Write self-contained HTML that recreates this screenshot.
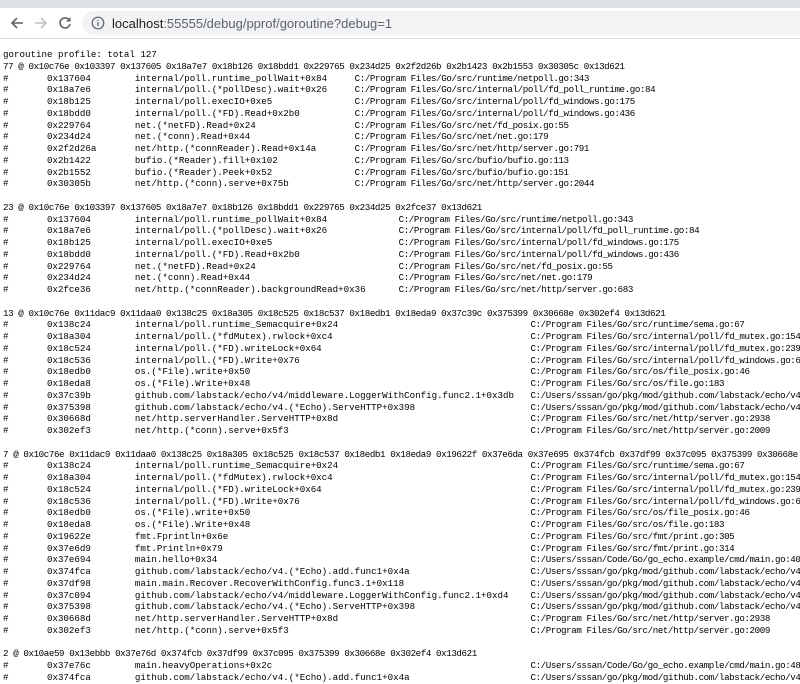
<!DOCTYPE html>
<html><head><meta charset="utf-8"><style>
html,body{margin:0;padding:0;width:800px;height:677px;overflow:hidden;background:#fff}
.tabs{position:absolute;left:0;top:0;width:800px;height:8px;background:#dee1e6}
.bar{position:absolute;left:0;top:8px;width:800px;height:30px;background:#fff;border-bottom:1px solid #dadce0}
.pill{position:absolute;left:82px;top:3px;width:730px;height:24px;border-radius:12px;background:#f1f3f4}
.url{position:absolute;left:112px;top:8px;font:13px "Liberation Sans",sans-serif;color:#202124;white-space:pre}
.url span{color:#5f6368}
.ic{position:absolute;top:7px}
pre{position:absolute;left:3px;top:49px;width:797px;overflow:hidden;margin:0;font-family:"Liberation Mono",monospace;font-size:9.17px;line-height:11.75px;color:#000;white-space:pre}
pre div{height:11.75px;overflow:hidden}
pre div.h{letter-spacing:-0.4px}
i{font-style:normal;display:inline-block;vertical-align:top}
.a{width:8ch}.b{width:16ch}.f1{width:40ch}.f2{width:48ch}.f3{width:72ch}
u{text-decoration:none;letter-spacing:-0.4px}
</style></head><body>
<div class="tabs"></div>
<div class="bar">
<svg class="ic" style="left:8px" width="18" height="16" viewBox="0 0 18 16"><path d="M15 8H4M9 3L4 8l5 5" stroke="#5f6368" stroke-width="1.6" fill="none"/></svg>
<svg class="ic" style="left:32px" width="18" height="16" viewBox="0 0 18 16"><path d="M3 8h11M9 3l5 5-5 5" stroke="#bdc1c6" stroke-width="1.6" fill="none"/></svg>
<svg class="ic" style="left:57px" width="16" height="16" viewBox="0 0 16 16"><path d="M12.5 5.5A5 5 0 1 0 13 9" stroke="#5f6368" stroke-width="1.6" fill="none"/><path d="M13.5 2v4.5H9z" fill="#5f6368"/></svg>
<div class="pill"></div>
<svg class="ic" style="left:91px;top:8px" width="14" height="14" viewBox="0 0 14 14"><circle cx="7" cy="7" r="5.8" stroke="#5f6368" stroke-width="1.2" fill="none"/><path d="M7 6v4M7 4v1" stroke="#5f6368" stroke-width="1.3"/></svg>
<div class="url">localhost<span>:55555/debug/pprof/goroutine?debug=1</span></div>
</div>
<pre><div>goroutine profile: total 127</div><div class="h">77 @ 0x10c76e 0x103397 0x137605 0x18a7e7 0x18b126 0x18bdd1 0x229765 0x234d25 0x2f2d26b 0x2b1423 0x2b1553 0x30305c 0x13d621</div><div><i class="a">#</i><i class="b">0x137604</i><i class="f1">internal/poll.runtime_pollWait+0x84</i><u>C:/Program Files/Go/src/runtime/netpoll.go:343</u></div><div><i class="a">#</i><i class="b">0x18a7e6</i><i class="f1">internal/poll.(*pollDesc).wait+0x26</i><u>C:/Program Files/Go/src/internal/poll/fd_poll_runtime.go:84</u></div><div><i class="a">#</i><i class="b">0x18b125</i><i class="f1">internal/poll.execIO+0xe5</i><u>C:/Program Files/Go/src/internal/poll/fd_windows.go:175</u></div><div><i class="a">#</i><i class="b">0x18bdd0</i><i class="f1">internal/poll.(*FD).Read+0x2b0</i><u>C:/Program Files/Go/src/internal/poll/fd_windows.go:436</u></div><div><i class="a">#</i><i class="b">0x229764</i><i class="f1">net.(*netFD).Read+0x24</i><u>C:/Program Files/Go/src/net/fd_posix.go:55</u></div><div><i class="a">#</i><i class="b">0x234d24</i><i class="f1">net.(*conn).Read+0x44</i><u>C:/Program Files/Go/src/net/net.go:179</u></div><div><i class="a">#</i><i class="b">0x2f2d26a</i><i class="f1">net/http.(*connReader).Read+0x14a</i><u>C:/Program Files/Go/src/net/http/server.go:791</u></div><div><i class="a">#</i><i class="b">0x2b1422</i><i class="f1">bufio.(*Reader).fill+0x102</i><u>C:/Program Files/Go/src/bufio/bufio.go:113</u></div><div><i class="a">#</i><i class="b">0x2b1552</i><i class="f1">bufio.(*Reader).Peek+0x52</i><u>C:/Program Files/Go/src/bufio/bufio.go:151</u></div><div><i class="a">#</i><i class="b">0x30305b</i><i class="f1">net/http.(*conn).serve+0x75b</i><u>C:/Program Files/Go/src/net/http/server.go:2044</u></div><div></div><div class="h">23 @ 0x10c76e 0x103397 0x137605 0x18a7e7 0x18b126 0x18bdd1 0x229765 0x234d25 0x2fce37 0x13d621</div><div><i class="a">#</i><i class="b">0x137604</i><i class="f2">internal/poll.runtime_pollWait+0x84</i><u>C:/Program Files/Go/src/runtime/netpoll.go:343</u></div><div><i class="a">#</i><i class="b">0x18a7e6</i><i class="f2">internal/poll.(*pollDesc).wait+0x26</i><u>C:/Program Files/Go/src/internal/poll/fd_poll_runtime.go:84</u></div><div><i class="a">#</i><i class="b">0x18b125</i><i class="f2">internal/poll.execIO+0xe5</i><u>C:/Program Files/Go/src/internal/poll/fd_windows.go:175</u></div><div><i class="a">#</i><i class="b">0x18bdd0</i><i class="f2">internal/poll.(*FD).Read+0x2b0</i><u>C:/Program Files/Go/src/internal/poll/fd_windows.go:436</u></div><div><i class="a">#</i><i class="b">0x229764</i><i class="f2">net.(*netFD).Read+0x24</i><u>C:/Program Files/Go/src/net/fd_posix.go:55</u></div><div><i class="a">#</i><i class="b">0x234d24</i><i class="f2">net.(*conn).Read+0x44</i><u>C:/Program Files/Go/src/net/net.go:179</u></div><div><i class="a">#</i><i class="b">0x2fce36</i><i class="f2">net/http.(*connReader).backgroundRead+0x36</i><u>C:/Program Files/Go/src/net/http/server.go:683</u></div><div></div><div class="h">13 @ 0x10c76e 0x11dac9 0x11daa0 0x138c25 0x18a305 0x18c525 0x18c537 0x18edb1 0x18eda9 0x37c39c 0x375399 0x30668e 0x302ef4 0x13d621</div><div><i class="a">#</i><i class="b">0x138c24</i><i class="f3">internal/poll.runtime_Semacquire+0x24</i><u>C:/Program Files/Go/src/runtime/sema.go:67</u></div><div><i class="a">#</i><i class="b">0x18a304</i><i class="f3">internal/poll.(*fdMutex).rwlock+0xc4</i><u>C:/Program Files/Go/src/internal/poll/fd_mutex.go:154</u></div><div><i class="a">#</i><i class="b">0x18c524</i><i class="f3">internal/poll.(*FD).writeLock+0x64</i><u>C:/Program Files/Go/src/internal/poll/fd_mutex.go:239</u></div><div><i class="a">#</i><i class="b">0x18c536</i><i class="f3">internal/poll.(*FD).Write+0x76</i><u>C:/Program Files/Go/src/internal/poll/fd_windows.go:639</u></div><div><i class="a">#</i><i class="b">0x18edb0</i><i class="f3">os.(*File).write+0x50</i><u>C:/Program Files/Go/src/os/file_posix.go:46</u></div><div><i class="a">#</i><i class="b">0x18eda8</i><i class="f3">os.(*File).Write+0x48</i><u>C:/Program Files/Go/src/os/file.go:183</u></div><div><i class="a">#</i><i class="b">0x37c39b</i><i class="f3">github.com/labstack/echo/v4/middleware.LoggerWithConfig.func2.1+0x3db</i><u>C:/Users/sssan/go/pkg/mod/github.com/labstack/echo/v4</u></div><div><i class="a">#</i><i class="b">0x375398</i><i class="f3">github.com/labstack/echo/v4.(*Echo).ServeHTTP+0x398</i><u>C:/Users/sssan/go/pkg/mod/github.com/labstack/echo/v4</u></div><div><i class="a">#</i><i class="b">0x30668d</i><i class="f3">net/http.serverHandler.ServeHTTP+0x8d</i><u>C:/Program Files/Go/src/net/http/server.go:2938</u></div><div><i class="a">#</i><i class="b">0x302ef3</i><i class="f3">net/http.(*conn).serve+0x5f3</i><u>C:/Program Files/Go/src/net/http/server.go:2009</u></div><div></div><div class="h">7 @ 0x10c76e 0x11dac9 0x11daa0 0x138c25 0x18a305 0x18c525 0x18c537 0x18edb1 0x18eda9 0x19622f 0x37e6da 0x37e695 0x374fcb 0x37df99 0x37c095 0x375399 0x30668e 0x302ef4 0x13d621</div><div><i class="a">#</i><i class="b">0x138c24</i><i class="f3">internal/poll.runtime_Semacquire+0x24</i><u>C:/Program Files/Go/src/runtime/sema.go:67</u></div><div><i class="a">#</i><i class="b">0x18a304</i><i class="f3">internal/poll.(*fdMutex).rwlock+0xc4</i><u>C:/Program Files/Go/src/internal/poll/fd_mutex.go:154</u></div><div><i class="a">#</i><i class="b">0x18c524</i><i class="f3">internal/poll.(*FD).writeLock+0x64</i><u>C:/Program Files/Go/src/internal/poll/fd_mutex.go:239</u></div><div><i class="a">#</i><i class="b">0x18c536</i><i class="f3">internal/poll.(*FD).Write+0x76</i><u>C:/Program Files/Go/src/internal/poll/fd_windows.go:639</u></div><div><i class="a">#</i><i class="b">0x18edb0</i><i class="f3">os.(*File).write+0x50</i><u>C:/Program Files/Go/src/os/file_posix.go:46</u></div><div><i class="a">#</i><i class="b">0x18eda8</i><i class="f3">os.(*File).Write+0x48</i><u>C:/Program Files/Go/src/os/file.go:183</u></div><div><i class="a">#</i><i class="b">0x19622e</i><i class="f3">fmt.Fprintln+0x6e</i><u>C:/Program Files/Go/src/fmt/print.go:305</u></div><div><i class="a">#</i><i class="b">0x37e6d9</i><i class="f3">fmt.Println+0x79</i><u>C:/Program Files/Go/src/fmt/print.go:314</u></div><div><i class="a">#</i><i class="b">0x37e694</i><i class="f3">main.hello+0x34</i><u>C:/Users/sssan/Code/Go/go_echo.example/cmd/main.go:40</u></div><div><i class="a">#</i><i class="b">0x374fca</i><i class="f3">github.com/labstack/echo/v4.(*Echo).add.func1+0x4a</i><u>C:/Users/sssan/go/pkg/mod/github.com/labstack/echo/v4</u></div><div><i class="a">#</i><i class="b">0x37df98</i><i class="f3">main.main.Recover.RecoverWithConfig.func3.1+0x118</i><u>C:/Users/sssan/go/pkg/mod/github.com/labstack/echo/v4</u></div><div><i class="a">#</i><i class="b">0x37c094</i><i class="f3">github.com/labstack/echo/v4/middleware.LoggerWithConfig.func2.1+0xd4</i><u>C:/Users/sssan/go/pkg/mod/github.com/labstack/echo/v4</u></div><div><i class="a">#</i><i class="b">0x375398</i><i class="f3">github.com/labstack/echo/v4.(*Echo).ServeHTTP+0x398</i><u>C:/Users/sssan/go/pkg/mod/github.com/labstack/echo/v4</u></div><div><i class="a">#</i><i class="b">0x30668d</i><i class="f3">net/http.serverHandler.ServeHTTP+0x8d</i><u>C:/Program Files/Go/src/net/http/server.go:2938</u></div><div><i class="a">#</i><i class="b">0x302ef3</i><i class="f3">net/http.(*conn).serve+0x5f3</i><u>C:/Program Files/Go/src/net/http/server.go:2009</u></div><div></div><div class="h">2 @ 0x10ae59 0x13ebbb 0x37e76d 0x374fcb 0x37df99 0x37c095 0x375399 0x30668e 0x302ef4 0x13d621</div><div><i class="a">#</i><i class="b">0x37e76c</i><i class="f3">main.heavyOperations+0x2c</i><u>C:/Users/sssan/Code/Go/go_echo.example/cmd/main.go:48</u></div><div><i class="a">#</i><i class="b">0x374fca</i><i class="f3">github.com/labstack/echo/v4.(*Echo).add.func1+0x4a</i><u>C:/Users/sssan/go/pkg/mod/github.com/labstack/echo/v4</u></div></pre>
</body></html>
